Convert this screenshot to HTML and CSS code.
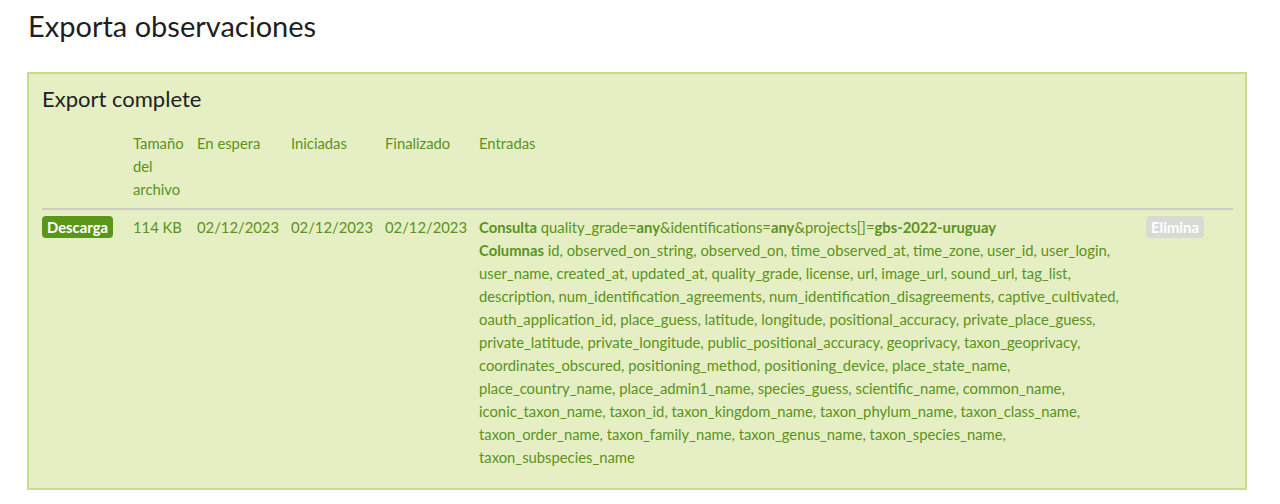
FILE: index.html
```html
<!DOCTYPE html>
<html lang="es">
<head>
<meta charset="utf-8">
<title>Exporta observaciones</title>
<link rel="stylesheet" href="styles.css">
</head>
<body>
<div class="page">
  <h1 class="title">Exporta observaciones</h1>
  <div class="export-box">
    <h3 class="box-title">Export complete</h3>
    <table class="export-table">
      <colgroup>
        <col class="c-action">
        <col class="c-size">
        <col class="c-date">
        <col class="c-date">
        <col class="c-date">
        <col class="c-inputs">
        <col class="c-delete">
      </colgroup>
      <thead>
        <tr>
          <th></th>
          <th>Tamaño del archivo</th>
          <th>En espera</th>
          <th>Iniciadas</th>
          <th>Finalizado</th>
          <th>Entradas</th>
          <th></th>
        </tr>
      </thead>
      <tbody>
        <tr>
          <td><a class="btn btn-download" href="#">Descarga</a></td>
          <td>114 KB</td>
          <td>02/12/2023</td>
          <td>02/12/2023</td>
          <td>02/12/2023</td>
          <td>
            <div class="entry"><strong>Consulta</strong> quality_grade=<strong>any</strong>&amp;identifications=<strong>any</strong>&amp;projects[]=<strong>gbs-2022-uruguay</strong></div>
            <div class="entry"><strong>Columnas</strong> id, observed_on_string, observed_on, time_observed_at, time_zone, user_id, user_login, user_name, created_at, updated_at, quality_grade, license, url, image_url, sound_url, tag_list, description, num_identification_agreements, num_identification_disagreements, captive_cultivated, oauth_application_id, place_guess, latitude, longitude, positional_accuracy, private_place_guess, private_latitude, private_longitude, public_positional_accuracy, geoprivacy, taxon_geoprivacy, coordinates_obscured, positioning_method, positioning_device, place_state_name, place_country_name, place_admin1_name, species_guess, scientific_name, common_name, iconic_taxon_name, taxon_id, taxon_kingdom_name, taxon_phylum_name, taxon_class_name, taxon_order_name, taxon_family_name, taxon_genus_name, taxon_species_name, taxon_subspecies_name</div>
          </td>
          <td><span class="btn btn-delete">Elimina</span></td>
        </tr>
      </tbody>
    </table>
  </div>
</div>
</body>
</html>
```

FILE: styles.css
```css
html, body {
  margin: 0;
  padding: 0;
  background: #ffffff;
}

body {
  font-family: Lato, "Open Sans", sans-serif;
  color: #222222;
}

.page {
  padding: 0 33px 0 27px;
}

.title {
  margin: 0;
  padding: 9px 0 0 1px;
  font-size: 29px;
  font-weight: 400;
  line-height: 34px;
  color: #1f1f1f;
}

.export-box {
  margin-top: 29px;
  background: #e5efc3;
  border: 2px solid #c8dc8f;
  padding: 12px 12px 19px 13px;
}

.box-title {
  margin: 0 0 19px 0;
  font-size: 22px;
  font-weight: 400;
  line-height: 26px;
  color: #222222;
}

.export-table {
  width: 100%;
  border-collapse: collapse;
  table-layout: fixed;
  font-size: 14.8px;
  line-height: 23px;
  color: #5b9220;
}

.c-action { width: 91px; }
.c-size { width: 64px; }
.c-date { width: 94px; }
.c-delete { width: 87px; }

.export-table th {
  font-weight: 400;
  text-align: left;
  vertical-align: top;
  padding: 1px 10px 7px 0;
  border-bottom: 2px solid #cdcfc6;
}

.export-table td {
  vertical-align: top;
  padding: 6px 10px 0 0;
}

.entry {
  line-height: 23px;
}

.btn {
  display: inline-block;
  font-weight: 700;
  font-size: 14.8px;
  line-height: 22px;
  padding: 0 5px;
  border-radius: 4px;
  color: #ffffff;
  text-decoration: none;
}

.btn-download {
  background: #5a9618;
}

.btn-delete {
  background: #d8dbd4;
}

strong {
  font-weight: 700;
}
```
